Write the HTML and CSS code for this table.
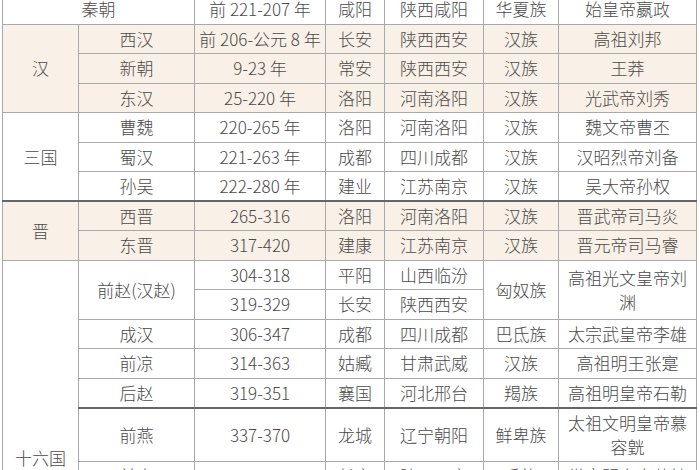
FILE: index.html
```html
<!DOCTYPE html>
<html lang="zh-CN">
<head>
<meta charset="utf-8">
<title>中国朝代表</title>
<link rel="stylesheet" href="styles.css">
</head>
<body>
<table class="dyn">
  <colgroup>
    <col class="c1"><col class="c2"><col class="c3"><col class="c4"><col class="c5"><col class="c6"><col class="c7">
  </colgroup>
  <tbody>
    <tr>
      <td colspan="2">秦朝</td><td>前 221-207 年</td><td>咸阳</td><td>陕西咸阳</td><td>华夏族</td><td>始皇帝嬴政</td>
    </tr>
    <tr class="bg md">
      <td rowspan="3">汉</td><td>西汉</td><td class="nw">前 206-公元 8 年</td><td>长安</td><td>陕西西安</td><td>汉族</td><td>高祖刘邦</td>
    </tr>
    <tr class="bg">
      <td>新朝</td><td>9-23 年</td><td>常安</td><td>陕西西安</td><td>汉族</td><td>王莽</td>
    </tr>
    <tr class="bg">
      <td>东汉</td><td>25-220 年</td><td>洛阳</td><td>河南洛阳</td><td>汉族</td><td>光武帝刘秀</td>
    </tr>
    <tr class="md">
      <td rowspan="3">三国</td><td>曹魏</td><td>220-265 年</td><td>洛阳</td><td>河南洛阳</td><td>汉族</td><td>魏文帝曹丕</td>
    </tr>
    <tr>
      <td>蜀汉</td><td>221-263 年</td><td>成都</td><td>四川成都</td><td>汉族</td><td>汉昭烈帝刘备</td>
    </tr>
    <tr>
      <td>孙吴</td><td>222-280 年</td><td>建业</td><td>江苏南京</td><td>汉族</td><td>吴大帝孙权</td>
    </tr>
    <tr class="bg tk">
      <td rowspan="2">晋</td><td>西晋</td><td>265-316</td><td>洛阳</td><td>河南洛阳</td><td>汉族</td><td>晋武帝司马炎</td>
    </tr>
    <tr class="bg">
      <td>东晋</td><td>317-420</td><td>建康</td><td>江苏南京</td><td>汉族</td><td>晋元帝司马睿</td>
    </tr>
    <tr class="md">
      <td rowspan="12">十六国</td><td rowspan="2">前赵(汉赵)</td><td>304-318</td><td>平阳</td><td>山西临汾</td><td rowspan="2">匈奴族</td><td rowspan="2">高祖光文皇帝刘渊</td>
    </tr>
    <tr>
      <td>319-329</td><td>长安</td><td>陕西西安</td>
    </tr>
    <tr>
      <td>成汉</td><td>306-347</td><td>成都</td><td>四川成都</td><td>巴氐族</td><td>太宗武皇帝李雄</td>
    </tr>
    <tr>
      <td>前凉</td><td>314-363</td><td>姑臧</td><td>甘肃武威</td><td>汉族</td><td>高祖明王张寔</td>
    </tr>
    <tr>
      <td>后赵</td><td>319-351</td><td>襄国</td><td>河北邢台</td><td>羯族</td><td>高祖明皇帝石勒</td>
    </tr>
    <tr class="tk">
      <td>前燕</td><td>337-370</td><td>龙城</td><td>辽宁朝阳</td><td>鲜卑族</td><td>太祖文明皇帝慕容皝</td>
    </tr>
    <tr>
      <td>前秦</td><td>351-394</td><td>长安</td><td>陕西西安</td><td>氐族</td><td>世宗明皇帝苻健</td>
    </tr>
    <tr>
      <td>后秦</td><td>384-417</td><td>长安</td><td>陕西西安</td><td>羌族</td><td>太祖武昭帝姚苌</td>
    </tr>
    <tr>
      <td>西秦</td><td>385-431</td><td>苑川</td><td>甘肃榆中</td><td>鲜卑族</td><td>烈祖宣烈王乞伏国仁</td>
    </tr>
    <tr>
      <td>后凉</td><td>386-403</td><td>姑臧</td><td>甘肃武威</td><td>氐族</td><td>太祖懿武帝吕光</td>
    </tr>
    <tr>
      <td>南凉</td><td>397-414</td><td>乐都</td><td>青海乐都</td><td>鲜卑族</td><td>烈祖武王秃发乌孤</td>
    </tr>
  </tbody>
</table>
</body>
</html>
```

FILE: styles.css
```css
html, body {
  margin: 0;
  padding: 0;
  background: #ffffff;
  overflow: hidden;
}

.dyn {
  border-collapse: collapse;
  table-layout: fixed;
  width: 694px;
  margin: -6px 0 0 2px;
  font-family: "Noto Sans CJK SC", "Noto Sans", sans-serif;
  font-size: 17px;
  font-weight: 300;
  color: #4a4a4a;
  border-left: 1px solid #cfcfcf;
}

.c1 { width: 76px; }
.c2 { width: 116px; }
.c3 { width: 131px; }
.c4 { width: 59px; }
.c5 { width: 99px; }
.c6 { width: 75px; }
.c7 { width: 138px; }

.dyn tr {
  height: 29.5px;
}

.dyn td {
  border: 1px solid #a9a9a9;
  padding: 2px 4px;
  line-height: 24px;
  text-align: center;
  vertical-align: middle;
}

.dyn tr.bg td {
  background: #f9f0e7;
}

.dyn tr.md td {
  border-top: 1px solid #858585;
}

.dyn tr.tk td {
  border-top: 2px solid #666666;
}

.dyn td.nw {
  white-space: nowrap;
  padding: 2px 1px;
}
```
